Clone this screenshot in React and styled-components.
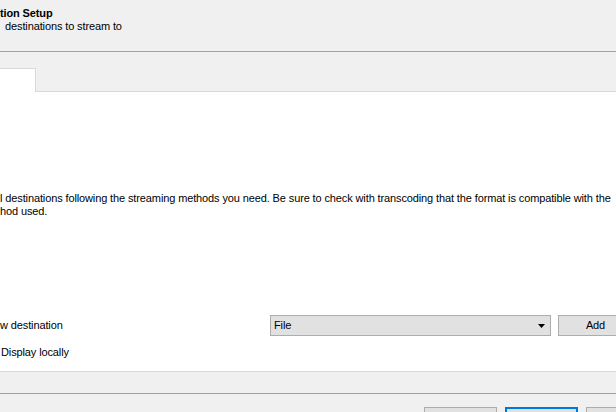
import React from "react";
import styled, { createGlobalStyle } from "styled-components";

const GlobalStyle = createGlobalStyle`
  html, body {
    margin: 0;
    padding: 0;
    overflow: hidden;
    background: #f0f0f0;
  }
  body {
    font-family: "Liberation Sans", Arial, sans-serif;
    font-size: 11px;
    letter-spacing: -0.12px;
    color: #000;
  }
`;

const Dialog = styled.div`
  width: 616px;
  height: 412px;
  overflow: hidden;
  display: flex;
  flex-direction: column;
  background: #f0f0f0;

  & > * {
    flex: none;
  }
`;

const Header = styled.div`
  height: 52px;
  box-sizing: border-box;
  padding-top: 7px;
  border-bottom: 1px solid #a0a0a0;
  line-height: 13px;
`;

const Title = styled.div`
  font-weight: bold;
`;

const Subtitle = styled.div`
  padding-left: 5px;
`;

const TabBar = styled.div`
  height: 40px;
  box-sizing: border-box;
  display: flex;
  align-items: flex-end;
  border-bottom: 1px solid #d9d9d9;
`;

const Tab = styled.div`
  width: 36px;
  height: 24px;
  box-sizing: border-box;
  margin-bottom: -1px;
  background: #fff;
  border-top: 1px solid #d9d9d9;
  border-right: 1px solid #d9d9d9;
`;

const Page = styled.div`
  height: 280px;
  box-sizing: border-box;
  background: #fff;
  border-bottom: 1px solid #d9d9d9;
  padding-top: 100px;
  line-height: 13px;
`;

const Description = styled.p`
  margin: 0;
  white-space: nowrap;
`;

const DestRow = styled.div`
  margin-top: 97px;
  display: flex;
  align-items: center;
  gap: 7px;
  height: 21px;
`;

const Label = styled.div`
  width: 263px;
  flex: none;
`;

const Combo = styled.div`
  width: 281px;
  height: 21px;
  box-sizing: border-box;
  flex: none;
  display: flex;
  align-items: center;
  justify-content: space-between;
  padding: 0 5px 0 3px;
  background: #e1e1e1;
  border: 1px solid #adadad;
`;

const Button = styled.div`
  width: ${p => p.$w || 75}px;
  height: ${p => p.$h || 21}px;
  box-sizing: border-box;
  flex: none;
  display: flex;
  align-items: center;
  justify-content: center;
  background: #e1e1e1;
  border: ${p => (p.$default ? "2px solid #0078d7" : "1px solid #adadad")};
`;

const CheckRow = styled.div`
  margin-top: 10px;
  padding-left: 1px;
`;

const Status = styled.div`
  height: 22px;
  box-sizing: border-box;
  border-bottom: 1px solid #a0a0a0;
`;

const ButtonBar = styled.div`
  display: flex;
  gap: 8px;
  padding: 13px 0 0 424px;
`;

function Arrow() {
  return (
    <svg width="7" height="4" viewBox="0 0 7 4">
      <path d="M0 0H7L3.5 4Z" fill="#000" />
    </svg>
  );
}

export default function App() {
  return (
    <>
      <GlobalStyle />
      <Dialog>
        <Header>
          <Title>tion Setup</Title>
          <Subtitle>destinations to stream to</Subtitle>
        </Header>
        <TabBar>
          <Tab />
        </TabBar>
        <Page>
          <Description>
            l destinations following the streaming methods you need. Be sure to
            check with transcoding that the format is compatible with the
          </Description>
          <Description>hod used.</Description>
          <DestRow>
            <Label>w destination</Label>
            <Combo>
              <span>File</span>
              <Arrow />
            </Combo>
            <Button>Add</Button>
          </DestRow>
          <CheckRow>Display locally</CheckRow>
        </Page>
        <Status />
        <ButtonBar>
          <Button $w={73} $h={23}>&lt; Back</Button>
          <Button $w={73} $h={23} $default>Next &gt;</Button>
          <Button $w={73} $h={23}>Cancel</Button>
        </ButtonBar>
      </Dialog>
    </>
  );
}
